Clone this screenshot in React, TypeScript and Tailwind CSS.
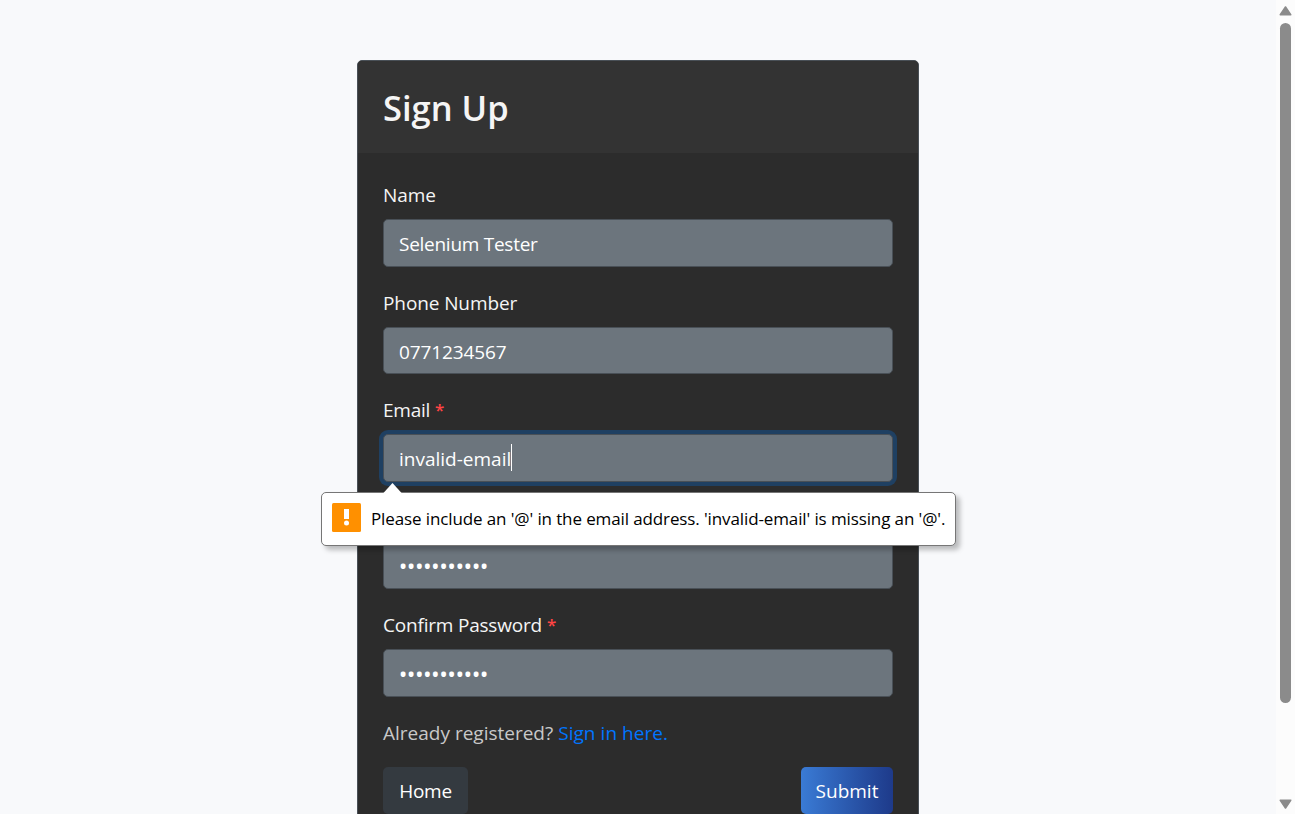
import type { ReactNode } from "react";

type FieldProps = {
  label?: string;
  value: string;
  type?: string;
  required?: boolean;
  focused?: boolean;
  labelClass?: string;
  valueClass: string;
  children?: ReactNode;
};

function Field({ label, value, type = "text", required, focused, labelClass = "", valueClass, children }: FieldProps) {
  return (
    <label className="relative mb-[19.8px] block">
      <span className="mb-[9px] flex h-[31px] items-center gap-[5px] pt-px text-[19px] text-[#f5f5f5]">
        {label && <span className={labelClass}>{label}</span>}
        {required && <span className="text-[17px] font-semibold text-[#ff4444]">*</span>}
      </span>
      <input
        type={type}
        defaultValue={value}
        className={
          "block h-[47.6px] w-full rounded-[5px] border border-[#495057] bg-[#6c757d] pt-[2px] text-white outline-none " +
          valueClass +
          (focused ? " shadow-[0_0_0_4px_#1f4062]" : "")
        }
      />
      {children}
    </label>
  );
}

function ValidationBubble() {
  return (
    <div className="absolute top-[98px] left-[-62px] z-10 h-[54px] w-[635px] rounded-[5px] border border-[#767676] bg-white shadow-[4px_4px_5px_rgba(0,0,0,0.25)]">
      <svg className="absolute top-[-10px] left-[60px] h-[11px] w-[21px]" viewBox="0 0 21 11">
        <path d="M0.5 11L10.5 0L20.5 11Z" fill="white" />
      </svg>
      <div className="flex h-full items-center pl-[10px]">
        <svg className="mt-[-3px] mr-[10px] h-[29px] w-[29px] shrink-0" viewBox="0 0 29 29">
          <rect width="29" height="29" rx="1.5" fill="#ff9000" />
          <rect x="12" y="6" width="5" height="10" fill="white" />
          <circle cx="14.5" cy="20" r="2.5" fill="white" />
        </svg>
        <span className="text-[17px] tracking-[-0.115px] whitespace-nowrap text-black">
          Please include an '@' in the email address. 'invalid-email' is missing an '@'.
        </span>
      </div>
    </div>
  );
}

function Scrollbar() {
  return (
    <div className="flex h-full w-[19px] shrink-0 flex-col items-center bg-[#fcfcfc]">
      <svg className="mt-[5px] h-[11px] w-[13px]" viewBox="0 0 13 11">
        <path d="M1.3 9.8L6.5 2L11.7 9.8Z" fill="#8b8b8b" stroke="#8b8b8b" strokeWidth="1.6" strokeLinejoin="round" />
      </svg>
      <div className="mt-[7px] h-[680px] w-[11px] rounded-full bg-[#8b8b8b]" />
      <svg className="mt-auto mb-[4px] h-[11px] w-[13px]" viewBox="0 0 13 11">
        <path d="M1.3 1.2L6.5 9L11.7 1.2Z" fill="#8b8b8b" stroke="#8b8b8b" strokeWidth="1.6" strokeLinejoin="round" />
      </svg>
    </div>
  );
}

export default function App() {
  return (
    <div className="flex h-screen overflow-hidden bg-[#f8f9fb] font-['Open_Sans','Noto_Sans',sans-serif]">
      <main className="flex-1 pt-[60px]">
        <div className="mx-auto w-[562px] rounded-[5px] border border-[#495057] bg-[#2c2c2c]">
          <header className="flex h-[92px] items-center rounded-t-[4px] bg-[#333333] px-[25px] pt-[2px]">
            <h1 className="text-[34.5px] leading-[42px] font-semibold text-[#f5f5f5]">Sign Up</h1>
          </header>
          <form className="px-[25px] pt-[26.4px] pb-[25px]">
            <Field label="Name" value="Selenium Tester" labelClass="tracking-[-0.1px]" valueClass="px-[15px] text-[19px] tracking-[-0.27px]" />
            <Field label="Phone Number" value="0771234567" labelClass="tracking-[-0.1px]" valueClass="px-[15px] text-[19px] tracking-[-0.1px]" />
            <Field label="Email" value="invalid-email" required focused labelClass="tracking-[-0.25px]" valueClass="px-[15px] text-[19px]">
              <span className="absolute top-[50px] left-[128px] h-[27px] w-px bg-white" />
              <ValidationBubble />
            </Field>
            <Field value="password123" type="password" valueClass="px-[14.7px] text-[23px] tracking-[-0.54px]" />
            <Field label="Confirm Password" value="password123" type="password" required labelClass="tracking-[-0.2px]" valueClass="px-[14.7px] text-[23px] tracking-[-0.54px]" />
            <p className="flex h-[31px] items-center gap-[5px] pt-[2px] text-[19px] text-[#c8c8c8]">
              <span>Already registered?</span>
              <a href="#" className="tracking-[0.05px] text-[#0075ff]">Sign in here.</a>
            </p>
            <div className="mt-[19.6px] flex justify-between text-[19px] text-white">
              <button type="button" className="h-[47px] w-[85px] rounded-[5px] bg-[#343a40] pt-px tracking-[-0.25px]">Home</button>
              <button type="button" className="h-[47px] w-[92px] rounded-[5px] bg-linear-to-r from-[#3a7bd5] to-[#1e3a8a] pt-px">Submit</button>
            </div>
          </form>
        </div>
      </main>
      <Scrollbar />
    </div>
  );
}
